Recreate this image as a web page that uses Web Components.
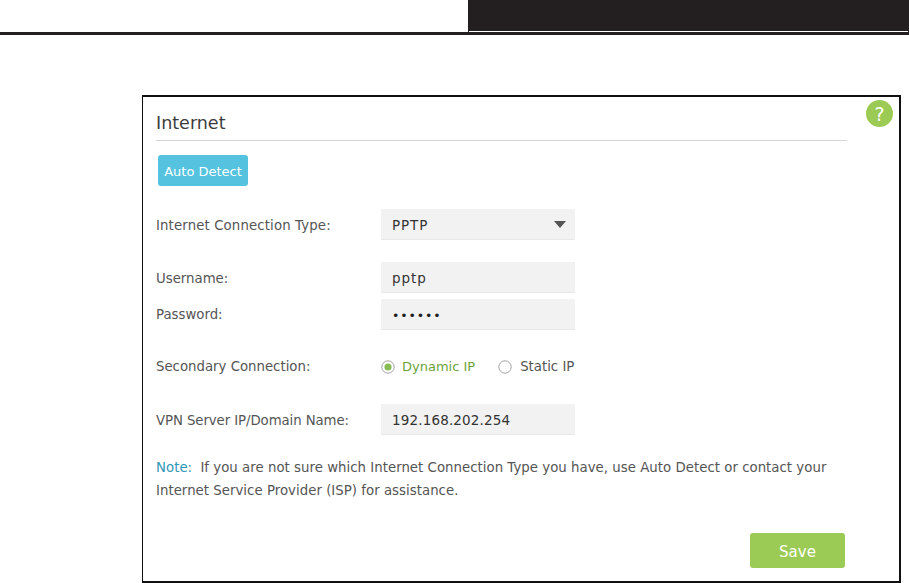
<!DOCTYPE html>
<html>
<head>
<meta charset="utf-8">
<style>
  html, body { margin: 0; padding: 0; background: #fff; }
  body { width: 909px; height: 583px; overflow: hidden; font-family: "DejaVu Sans", sans-serif; }
</style>
</head>
<body>
<top-bar></top-bar>
<settings-panel heading="Internet">
  <action-button slot="detect" kind="blue">Auto Detect</action-button>

  <form-row label="Internet Connection Type:" style="margin-top:23px; letter-spacing:.13px; --label-top:2px">
    <text-field arrow style="letter-spacing:.9px">PPTP</text-field>
  </form-row>
  <form-row label="Username:" style="margin-top:22px; --label-top:2px">
    <text-field style="letter-spacing:.9px">pptp</text-field>
  </form-row>
  <form-row label="Password:" style="margin-top:6px">
    <text-field dots="6"></text-field>
  </form-row>
  <form-row label="Secondary Connection:" style="margin-top:29px">
    <radio-option checked>Dynamic IP</radio-option>
    <radio-option style="margin-left:23px; font-size:13.3px; gap:8px">Static IP</radio-option>
  </form-row>
  <form-row label="VPN Server IP/Domain Name:" style="margin-top:30px; letter-spacing:-.08px; --label-top:2px">
    <text-field style="letter-spacing:.15px">192.168.202.254</text-field>
  </form-row>
  <note-text>
    <span slot="first">If you are not sure which Internet Connection Type you have, use Auto Detect or contact your</span>
    <span slot="second">Internet Service Provider (ISP) for assistance.</span>
  </note-text>

  <action-button slot="save" kind="green" wide>Save</action-button>
</settings-panel>

<script>
class TopBar extends HTMLElement {
  constructor() {
    super();
    this.attachShadow({ mode: "open" });
  }
  connectedCallback() {
    this.shadowRoot.innerHTML = /*html*/ `
    <style>
      :host { display: block; height: 35px; border-bottom: 3px solid #231f20; box-sizing: border-box; }
      .row { display: flex; justify-content: flex-end; }
      .dark { width: 441px; height: 32px; background: #231f20; display: flex; align-items: flex-end; }
      .line { flex: 1; height: 1px; margin: 0 1px; background: #fff; }
    </style>
    <div class="row"><div class="dark"><div class="line"></div></div></div>`;
  }
}

class SettingsPanel extends HTMLElement {
  constructor() {
    super();
    this.attachShadow({ mode: "open" });
  }
  connectedCallback() {
    const heading = this.getAttribute("heading");
    this.shadowRoot.innerHTML = /*html*/ `
    <style>
      :host {
        display: block;
        position: relative;
        box-sizing: border-box;
        width: 759px;
        height: 488px;
        margin: 60px 0 0 142px;
        padding: 0 52px 0 13px;
        border: solid #111;
        border-width: 2px 2px 2px 1px;
        background: #fff;
      }
      h2 {
        margin: 0;
        height: 44px;
        box-sizing: border-box;
        padding-top: 16px;
        font-size: 17.5px;
        line-height: 21px;
        font-weight: 400;
        color: #3c3c3c;
        border-bottom: 1px solid #d4d4d4;
      }
      .detect { padding: 14px 0 0 2px; display: flex; }
      .foot { display: flex; justify-content: flex-end; margin-top: 31px; padding-right: 2px; }
      .help {
        position: absolute;
        top: 3px;
        right: 6px;
        width: 27px;
        height: 27px;
        border-radius: 50%;
        background: #9bcb54;
        color: #fff;
        font-size: 19px;
        font-weight: 400;
        line-height: 29px;
        text-align: center;
      }
    </style>
    <h2>${heading}</h2>
    <div class="detect"><slot name="detect"></slot></div>
    <slot></slot>
    <div class="foot"><slot name="save"></slot></div>
    <div class="help">?</div>`;
  }
}

class ActionButton extends HTMLElement {
  constructor() {
    super();
    this.attachShadow({ mode: "open" });
  }
  connectedCallback() {
    this.shadowRoot.innerHTML = /*html*/ `
    <style>
      :host {
        display: inline-flex;
        align-items: center;
        justify-content: center;
        box-sizing: border-box;
        width: 90px;
        height: 31px;
        padding-top: 2px;
        border-radius: 3px;
        background: #55c3e0;
        color: #fff;
        font-size: 13px;
      }
      :host([kind="green"]) { background: #9bcb54; }
      :host([wide]) { width: 95px; height: 35px; font-size: 15px; }
    </style>
    <slot></slot>`;
  }
}

class FormRow extends HTMLElement {
  constructor() {
    super();
    this.attachShadow({ mode: "open" });
  }
  connectedCallback() {
    const label = this.getAttribute("label");
    this.shadowRoot.innerHTML = /*html*/ `
    <style>
      :host { display: flex; align-items: center; }
      .label { width: 225px; flex: none; margin-top: var(--label-top, 0); font-size: 13.3px; color: #555; white-space: nowrap; }
    </style>
    <div class="label">${label}</div>
    <slot></slot>`;
  }
}

class TextField extends HTMLElement {
  constructor() {
    super();
    this.attachShadow({ mode: "open" });
  }
  connectedCallback() {
    const dots = Number(this.getAttribute("dots") || 0);
    const arrow = this.hasAttribute("arrow");
    this.shadowRoot.innerHTML = /*html*/ `
    <style>
      :host {
        display: flex;
        align-items: center;
        justify-content: space-between;
        box-sizing: border-box;
        width: 194px;
        height: 31px;
        padding: 2px 9px 0 11px;
        background: #f2f2f2;
        border-bottom: 1px solid #e8e8e8;
        color: #333;
        font-size: 13.5px;
        white-space: nowrap;
      }
      .dots { letter-spacing: 0.9px; font-size: 12.5px; color: #222; }
      svg { display: block; margin-top: -2px; }
    </style>
    <span><slot></slot>${dots ? `<span class="dots">${"•".repeat(dots)}</span>` : ""}</span>
    ${arrow ? `<svg width="12" height="7" viewBox="0 0 12 7"><path d="M0 0h12L6 7z" fill="#555"/></svg>` : ""}`;
  }
}

class RadioOption extends HTMLElement {
  constructor() {
    super();
    this.attachShadow({ mode: "open" });
  }
  connectedCallback() {
    const checked = this.hasAttribute("checked");
    this.shadowRoot.innerHTML = /*html*/ `
    <style>
      :host { display: inline-flex; align-items: center; gap: 7px; font-size: 13px; color: #555; white-space: nowrap; }
      :host([checked]) { color: #6ba33a; }
      svg { display: block; flex: none; }
    </style>
    <svg width="14" height="14" viewBox="0 0 14 14">
      <circle cx="7" cy="7" r="6.2" fill="#fff" stroke="#a3a3a3"/>
      ${checked ? `<circle cx="7" cy="7" r="3.6" fill="#86bb55"/>` : ""}
    </svg>
    <slot></slot>`;
  }
}

class NoteText extends HTMLElement {
  constructor() {
    super();
    this.attachShadow({ mode: "open" });
  }
  connectedCallback() {
    this.shadowRoot.innerHTML = /*html*/ `
    <style>
      :host { display: block; margin-top: 21px; font-size: 13.3px; line-height: 23px; letter-spacing: .03px; color: #555; white-space: nowrap; }
      b { font-weight: 400; color: #2f97b5; margin-right: 4px; }
      div { display: block; }
    </style>
    <div><b>Note:</b> <slot name="first"></slot></div>
    <div><slot name="second"></slot></div>`;
  }
}

customElements.define("top-bar", TopBar);
customElements.define("settings-panel", SettingsPanel);
customElements.define("action-button", ActionButton);
customElements.define("form-row", FormRow);
customElements.define("text-field", TextField);
customElements.define("radio-option", RadioOption);
customElements.define("note-text", NoteText);
</script>
</body>
</html>
